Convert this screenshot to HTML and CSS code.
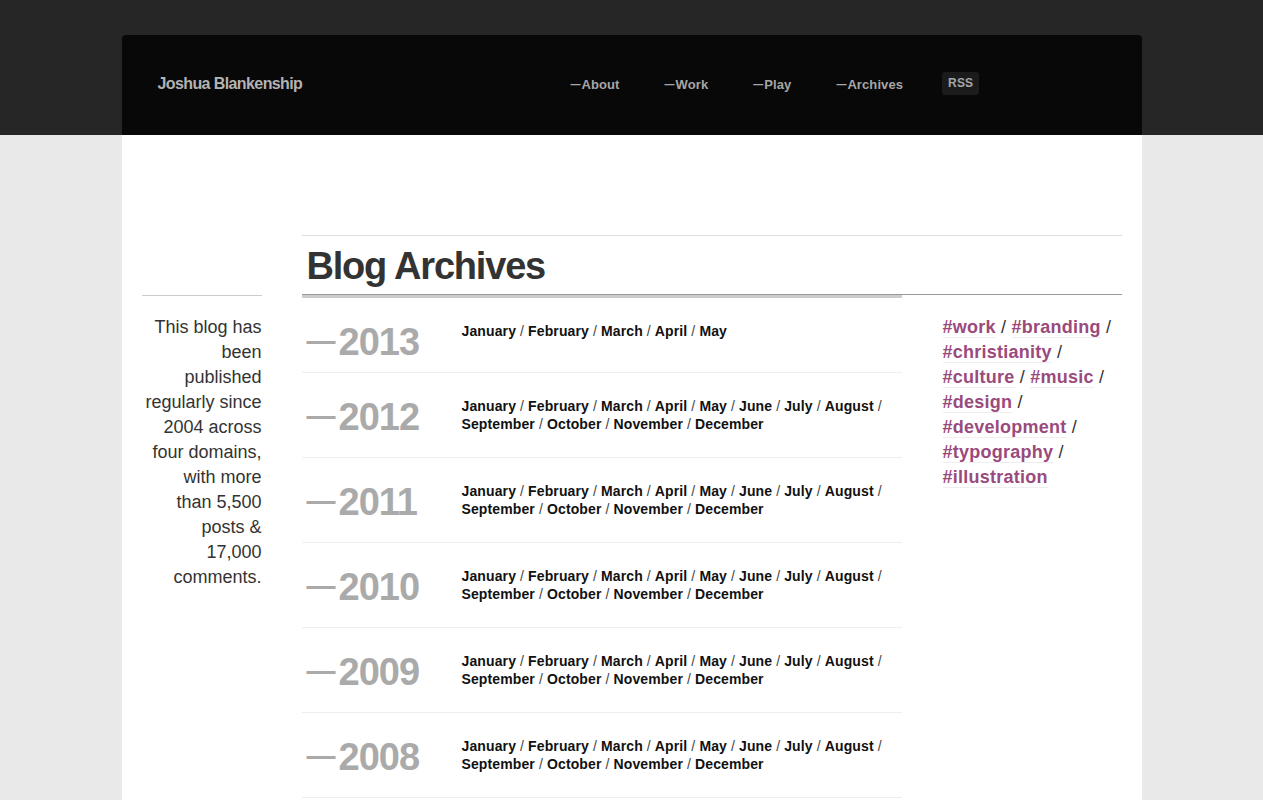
FILE: index.html
```html
<!DOCTYPE html>
<html lang="en">
<head>
<meta charset="utf-8">
<title>Blog Archives — Joshua Blankenship</title>
<link rel="stylesheet" href="styles.css">
</head>
<body>
<div class="page">
  <header class="site-header">
    <a class="logo" href="#">Joshua Blankenship</a>
    <nav class="nav">
      <a href="#"><span class="dash">—</span>About</a>
      <a href="#"><span class="dash">—</span>Work</a>
      <a href="#"><span class="dash">—</span>Play</a>
      <a href="#"><span class="dash">—</span>Archives</a>
      <a class="rss" href="#">RSS</a>
    </nav>
  </header>
  <main class="main">
    <aside class="intro">
      <p>This blog has been published regularly since 2004 across four domains, with more than 5,500 posts &amp; 17,000 comments.</p>
    </aside>
    <section class="archives">
      <h1 class="title">Blog Archives</h1>
      <div class="archive-body">
        <ol class="years">
          <li class="year-row">
            <h2 class="year"><span class="dash">—</span>2013</h2>
            <p class="months"><a href="#">January</a> / <a href="#">February</a> / <a href="#">March</a> / <a href="#">April</a> / <a href="#">May</a></p>
          </li>
          <li class="year-row">
            <h2 class="year"><span class="dash">—</span>2012</h2>
            <p class="months"><a href="#">January</a> / <a href="#">February</a> / <a href="#">March</a> / <a href="#">April</a> / <a href="#">May</a> / <a href="#">June</a> / <a href="#">July</a> / <a href="#">August</a> / <a href="#">September</a> / <a href="#">October</a> / <a href="#">November</a> / <a href="#">December</a></p>
          </li>
          <li class="year-row">
            <h2 class="year"><span class="dash">—</span>2011</h2>
            <p class="months"><a href="#">January</a> / <a href="#">February</a> / <a href="#">March</a> / <a href="#">April</a> / <a href="#">May</a> / <a href="#">June</a> / <a href="#">July</a> / <a href="#">August</a> / <a href="#">September</a> / <a href="#">October</a> / <a href="#">November</a> / <a href="#">December</a></p>
          </li>
          <li class="year-row">
            <h2 class="year"><span class="dash">—</span>2010</h2>
            <p class="months"><a href="#">January</a> / <a href="#">February</a> / <a href="#">March</a> / <a href="#">April</a> / <a href="#">May</a> / <a href="#">June</a> / <a href="#">July</a> / <a href="#">August</a> / <a href="#">September</a> / <a href="#">October</a> / <a href="#">November</a> / <a href="#">December</a></p>
          </li>
          <li class="year-row">
            <h2 class="year"><span class="dash">—</span>2009</h2>
            <p class="months"><a href="#">January</a> / <a href="#">February</a> / <a href="#">March</a> / <a href="#">April</a> / <a href="#">May</a> / <a href="#">June</a> / <a href="#">July</a> / <a href="#">August</a> / <a href="#">September</a> / <a href="#">October</a> / <a href="#">November</a> / <a href="#">December</a></p>
          </li>
          <li class="year-row">
            <h2 class="year"><span class="dash">—</span>2008</h2>
            <p class="months"><a href="#">January</a> / <a href="#">February</a> / <a href="#">March</a> / <a href="#">April</a> / <a href="#">May</a> / <a href="#">June</a> / <a href="#">July</a> / <a href="#">August</a> / <a href="#">September</a> / <a href="#">October</a> / <a href="#">November</a> / <a href="#">December</a></p>
          </li>
          <li class="year-row">
            <h2 class="year"><span class="dash">—</span>2007</h2>
            <p class="months"><a href="#">January</a> / <a href="#">February</a> / <a href="#">March</a> / <a href="#">April</a> / <a href="#">May</a> / <a href="#">June</a> / <a href="#">July</a> / <a href="#">August</a> / <a href="#">September</a> / <a href="#">October</a> / <a href="#">November</a> / <a href="#">December</a></p>
          </li>
        </ol>
        <div class="tags">
          <a href="#">#work</a> / <a href="#">#branding</a> / <a href="#">#christianity</a> / <a href="#">#culture</a> / <a href="#">#music</a> / <a href="#">#design</a> / <a href="#">#development</a> / <a href="#">#typography</a> / <a href="#">#illustration</a>
        </div>
      </div>
    </section>
  </main>
</div>
</body>
</html>
```
FILE: styles.css
```css
html, body {
  margin: 0;
  padding: 0;
}
body {
  background: linear-gradient(#262626 0, #262626 135px, #e9e9e9 135px, #e9e9e9 100%);
  background-color: #e9e9e9;
  font-family: "Liberation Sans", Arial, sans-serif;
  color: #333;
  min-height: 100vh;
}
a {
  text-decoration: none;
  color: inherit;
}
.page {
  width: 1020px;
  margin: 0 auto;
  padding-top: 35px;
}

/* header */
.site-header {
  height: 100px;
  background: #080808;
  border-radius: 4px 4px 0 0;
  display: flex;
  align-items: center;
  padding-left: 36px;
}
.logo {
  width: 413px;
  flex: none;
  font-size: 16px;
  font-weight: bold;
  letter-spacing: -0.6px;
  color: #b3b3b3;
  margin-top: -2px;
}
.nav {
  display: flex;
  align-items: center;
  gap: 45px;
  margin-top: -2px;
}
.nav a {
  font-size: 13px;
  font-weight: bold;
  color: #a6a6a6;
  letter-spacing: 0.1px;
}
.nav .dash {
  font-size: 10px;
  letter-spacing: 0;
  margin-right: 1px;
  vertical-align: 1px;
}
.nav .rss {
  margin-left: -6px;
  background: #1b1b1b;
  border-radius: 3px;
  font-size: 12px;
  padding: 0 6px;
  height: 23px;
  line-height: 23px;
  margin-top: -1px;
}

/* main */
.main {
  background: #fff;
  min-height: 900px;
  padding: 100px 20px 0;
  display: grid;
  grid-template-columns: 120px 820px;
  column-gap: 40px;
  align-items: start;
}
.intro {
  margin-top: 60px;
  border-top: 1px solid #ccc;
  padding-top: 19px;
  text-align: right;
}
.intro p {
  margin: 0;
  font-size: 18px;
  line-height: 25px;
  color: #333;
  width: 118px;
  margin-left: auto;
}
.archives {
  border-top: 1px solid #ddd;
}
.title {
  margin: 0;
  height: 58px;
  line-height: 60px;
  padding-left: 5px;
  font-size: 38px;
  letter-spacing: -1.2px;
  color: #333;
  border-bottom: 1px solid #999;
}
.archive-body {
  display: flex;
  align-items: flex-start;
}
.years {
  list-style: none;
  margin: 0;
  padding: 0;
  width: 600px;
  flex: none;
  border-top: 3px solid #ccc;
}
.year-row {
  display: flex;
  align-items: flex-start;
  border-bottom: 1px solid #eee;
}
.year {
  margin: 0;
  width: 155px;
  height: 42px;
  flex: none;
  padding: 24px 0 8px 5px;
  line-height: 40px;
  font-size: 38px;
  letter-spacing: -1px;
  color: #aaa;
}
.year .dash {
  font-size: 29px;
  line-height: 0;
  letter-spacing: 0;
  vertical-align: 4px;
  margin-right: 3px;
}
.months {
  margin: 0;
  padding: 24px 0;
  font-size: 14px;
  line-height: 18px;
  letter-spacing: 0.12px;
  color: #444;
}
.months a {
  font-weight: bold;
  color: #111;
}
.tags {
  margin-left: 41px;
  width: 180px;
  padding-top: 20px;
  font-size: 18px;
  line-height: 25px;
  letter-spacing: 0.25px;
  color: #333;
}
.tags a {
  font-weight: bold;
  color: #9a4a7c;
  border-bottom: 1px solid #eee;
}
```
